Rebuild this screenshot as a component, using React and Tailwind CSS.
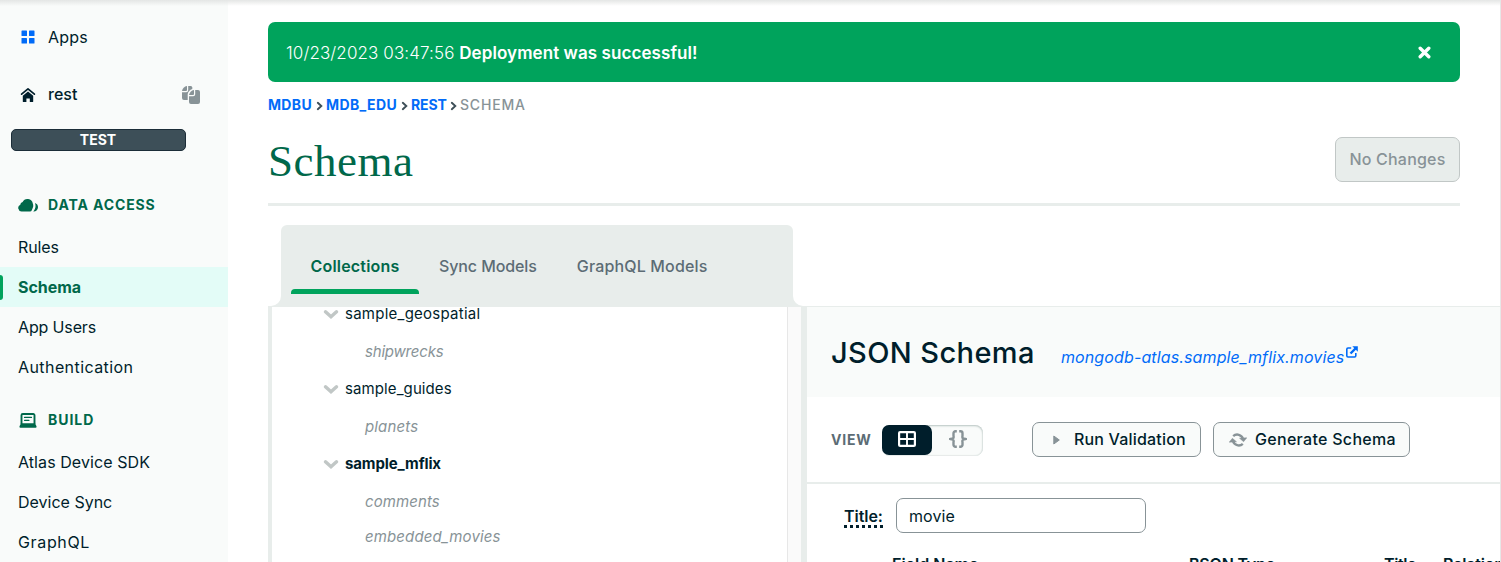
import React from "react";

const dataAccess = [
  { label: "Rules", cls: "tracking-[-0.1px]" },
  { label: "Schema", active: true, cls: "" },
  { label: "App Users", cls: "tracking-[-0.14px]" },
  { label: "Authentication", cls: "tracking-[0.42px]" },
];
const build = [
  { label: "Atlas Device SDK", cls: "tracking-[0.08px]" },
  { label: "Device Sync", cls: "" },
  { label: "GraphQL", cls: "tracking-[0.65px]" },
];
const tree = [
  { label: "sample_geospatial", cls: "tracking-[0.25px]", db: true },
  { label: "shipwrecks", cls: "tracking-[-0.2px]" },
  { label: "sample_guides", cls: "tracking-[0.1px]", db: true },
  { label: "planets", cls: "tracking-[0.15px]" },
  { label: "sample_mflix", cls: "font-bold tracking-[-0.12px] text-[#001e2b]", db: true },
  { label: "comments", cls: "tracking-[0.1px]" },
];

function AppsIcon() {
  return (
    <svg width="14" height="14" viewBox="0 0 14 14" fill="#016bf8">
      <rect x="0.5" y="0.5" width="5.5" height="5.5" rx="0.6" />
      <rect x="8" y="0.5" width="5.5" height="5.5" rx="0.6" />
      <rect x="0.5" y="8" width="5.5" height="5.5" rx="0.6" />
      <rect x="8" y="8" width="5.5" height="5.5" rx="0.6" />
    </svg>
  );
}

function HomeIcon() {
  return (
    <svg width="16" height="16" viewBox="0 0 16 16">
      <path d="M1.6 7.2 8 1.8l6.4 5.4" fill="none" stroke="#001e2b" strokeWidth="1.7" strokeLinecap="round" strokeLinejoin="round" />
      <path d="M8 4.400 13.200 8.800V14.400a.7.7 0 0 1-.7.7H9.800V11.500H6.400v3.600H3.500a.7.7 0 0 1-.7-.7V8.800z" fill="#001e2b" />
    </svg>
  );
}

function CopyIcon() {
  return (
    <svg width="18" height="18" viewBox="0 0 18 18" fill="#889397">
      <path d="M5 0v4a1 1 0 0 1-1 1H0C.3 2.400 2.400.3 5 0z" />
      <path d="M6.200 0H8.500a2 2 0 0 1 1.800 1.200V3C7.800 4 6.200 5.500 5.700 8v6H2a2 2 0 0 1-2-2V6.200h4.200a2 2 0 0 0 2-2z" />
      <path d="M12 4v4a1 1 0 0 1-1 1H7c.5-2.600 2.300-4.600 5-5z" />
      <path d="M13.200 4H16a2 2 0 0 1 2 2v10a2 2 0 0 1-2 2H9a2 2 0 0 1-2-2v-5.800h4.200a2 2 0 0 0 2-2z" />
    </svg>
  );
}

function CloudIcon() {
  return (
    <svg width="20" height="14" viewBox="0 0 20 14" fill="#00684a">
      <path d="M3.500 13.500A3.500 3.500 0 0 1 2.300 6.800 3 3 0 0 1 4.600 4 5.400 5.400 0 0 1 14.800 5.500c.5 1.200.6 2.400.2 3.800l-1.200 2.900a2 2 0 0 1-1.800 1.300z" />
      <path d="M17 4.900A4.600 4.600 0 0 1 20 9.300a4.200 4.200 0 0 1-4.700 4.100c1.400-1.500 2.100-3.100 2.200-4.900.1-1.300-.1-2.500-.5-3.600z" />
    </svg>
  );
}

function LaptopIcon() {
  return (
    <svg width="18" height="15" viewBox="0 0 18 15">
      <path d="M2.500 11V2.300A1.300 1.300 0 0 1 3.800 1h10.400a1.300 1.300 0 0 1 1.300 1.300V11" fill="none" stroke="#00684a" strokeWidth="1.900" />
      <path d="M5.500 4.400h7M5.500 7.300h4.500" stroke="#00684a" strokeWidth="1.200" strokeLinecap="round" />
      <path d="M2 10.300h14l1.500 3v.6a.8.8 0 0 1-.8.800H1.300a.8.8 0 0 1-.8-.8v-.6z" fill="#00684a" />
    </svg>
  );
}

function RefreshIcon() {
  return (
    <svg width="18" height="16" viewBox="0 0 18 16">
      <g fill="none" stroke="#889397" strokeWidth="2.400">
        <path d="M4.200 4.200A6 6 0 0 1 14 6.800" />
        <path d="M13.800 11.800A6 6 0 0 1 4 9.200" />
      </g>
      <path d="M10.500 6.200 17.800 5.800 14.600 9.700z M7.500 9.800.2 10.200 3.400 6.300z" fill="#889397" stroke="#889397" strokeWidth=".5" strokeLinejoin="round" />
    </svg>
  );
}

function ExternalIcon() {
  return (
    <svg width="12" height="12" viewBox="0 0 12 12" className="mt-[1px] ml-[2px]">
      <path d="M5.200 2H2a1.200 1.200 0 0 0-1.200 1.200V9.800A1.200 1.200 0 0 0 2 11h6.600a1.200 1.200 0 0 0 1.200-1.200V7" fill="none" stroke="#016bf8" strokeWidth="1.600" />
      <path d="M4.500 7.500 9.500 2.500" stroke="#016bf8" strokeWidth="2.400" />
      <path d="M6.300.2H11.800V5.700z" fill="#016bf8" />
    </svg>
  );
}

function Chevron() {
  return (
    <svg width="16" height="11" viewBox="0 0 16 11" className="mr-[6px]">
      <path d="M2.500 2.800 8 7.700l5.500-4.900" fill="none" stroke="#c1c7c6" strokeWidth="3.500" strokeLinecap="round" strokeLinejoin="miter" />
    </svg>
  );
}

function Crumb() {
  return (
    <svg width="10" height="10" viewBox="0 0 10 10" className="mt-px">
      <path d="M1.800 1.800 5.300 5 1.800 8.200" fill="none" stroke="#3d4f58" strokeWidth="1.900" strokeLinecap="round" />
    </svg>
  );
}

function NavItem({ item }) {
  return item.active ? (
    <a className="relative flex h-10 items-center bg-[#e3fcf7] pl-[18px] font-bold tracking-[-0.05px] text-[#00684a]">
      <span className="absolute top-2 left-0 h-[25px] w-[3px] rounded-r-[4px] bg-[#00a35c]" />
      <span className={item.cls}>{item.label}</span>
    </a>
  ) : (
    <a className="flex h-10 items-center pl-[18px]">
      <span className={item.cls}>{item.label}</span>
    </a>
  );
}

function Sidebar() {
  return (
    <nav className="flex h-full w-[228px] shrink-0 flex-col bg-[#f9fbfa] text-base">
      <div className="mt-[22px] flex h-[30px] items-center pl-[21px]">
        <AppsIcon />
        <span className="ml-[13px] tracking-[0.2px]">Apps</span>
      </div>
      <div className="mt-[27px] flex h-[32px] items-center pr-[28px] pl-[20px]">
        <HomeIcon />
        <span className="-mt-[2px] ml-[12px] flex-1 font-medium">rest</span>
        <CopyIcon />
      </div>
      <div className="mt-[18px] ml-[11px] flex h-[22px] w-[175px] items-center justify-center rounded-[5px] border border-[#1c2d38] bg-[#3d4f58] pr-px text-sm font-bold text-white">
        TEST
      </div>
      <div className="mt-[39px] flex h-[30px] items-center pl-[18px] text-sm font-bold text-[#00684a]">
        <CloudIcon />
        <span className="ml-[10px] tracking-[0.87px]">DATA ACCESS</span>
      </div>
      <div className="mt-[7px] flex flex-col">
        {dataAccess.map((i) => <NavItem key={i.label} item={i} />)}
      </div>
      <div className="mt-[18px] flex h-[30px] items-center pl-[19px] text-sm font-bold text-[#00684a]">
        <LaptopIcon />
        <span className="ml-[11px] tracking-[0.95px]">BUILD</span>
      </div>
      <div className="mt-[7px] flex flex-col">
        {build.map((i) => <NavItem key={i.label} item={i} />)}
      </div>
    </nav>
  );
}

function Tabs() {
  return (
    <div className="flex h-[82px] items-end">
      <svg width="13" height="82" viewBox="0 0 13 82">
        <path d="M3 81A10 10 0 0 0 13 71V82H0V81z" fill="#e8edeb" />
      </svg>
      <div className="flex h-full w-[512px] rounded-t-[6px] bg-[#e8edeb] pl-[10px] font-medium text-[#5c6c75]">
        <div className="flex h-[69px] w-[128px] flex-col items-center justify-end font-semibold text-[#00684a]">
          <span className="mb-[11px] tracking-[0.2px]">Collections</span>
          <span className="h-[5px] w-full rounded-t-[4px] bg-[#00a35c]" />
        </div>
        <div className="ml-[20px] h-[69px] pt-[29px] tracking-[-0.1px]">Sync Models</div>
        <div className="ml-[40px] h-[69px] pt-[29px] tracking-[0.16px]">GraphQL Models</div>
      </div>
      <svg width="10" height="82" viewBox="0 0 10 82">
        <path d="M10 81A10 10 0 0 1 0 71V82H10z" fill="#e8edeb" />
      </svg>
      <div className="h-px flex-1 bg-[#e8edeb]" />
    </div>
  );
}

function Tree() {
  return (
    <div className="flex h-full w-[539px] shrink-0 border-l-4 border-[#e8edeb]">
      <div className="h-full w-[515px] overflow-hidden text-[15px]">
        <div className="-mt-[11.5px] flex flex-col">
          {tree.map((n) =>
            n.db ? (
              <div key={n.label} className="flex h-[37.5px] items-center pl-[51px]">
                <Chevron />
                <span className={n.cls}>{n.label}</span>
              </div>
            ) : (
              <div key={n.label} className="flex h-[37.5px] items-center pl-[93px] text-[#889397] italic">
                <span className={n.cls}>{n.label}</span>
              </div>
            )
          )}
          <div className="flex h-[33px] items-center pl-[93px] tracking-[0.13px] text-[#889397] italic">embedded_movies</div>
        </div>
      </div>
      <div className="h-full w-[14px] border-l border-[#e7e7e7] bg-[#fafafa]" />
      <div className="h-full w-[6px] bg-[#e8edeb]" />
    </div>
  );
}

function SchemaPanel() {
  return (
    <div className="flex h-full min-w-0 flex-1 flex-col">
      <div className="flex h-[90px] shrink-0 items-center bg-[#f9fbfa] pl-[24px]">
        <h2 className="mt-[2px] text-[29px] font-medium tracking-[0.4px]">JSON Schema</h2>
        <a className="mt-[10px] ml-[26px] flex items-start text-[#016bf8] italic">
          <span className="tracking-[0.13px]">mongodb-atlas.sample_mflix.movies</span>
          <ExternalIcon />
        </a>
      </div>
      <div className="flex h-[87px] shrink-0 items-center border-b-2 border-[#e8edeb] pl-[24px]">
        <span className="w-[51px] text-sm font-bold tracking-[0.8px] text-[#5c6c75]">VIEW</span>
        <div className="mt-px flex h-[31px] w-[101px] rounded-[8px] bg-[#f9fbfa] shadow-[inset_0_1px_2px_#b8c4c2,inset_0_-1px_1px_#e8edeb,inset_-1px_0_1px_#e8edeb]">
          <div className="flex h-[30px] w-[50px] items-center justify-center rounded-[7px] bg-[#001e2b]">
            <svg width="18" height="16" viewBox="0 0 18 16" className="-mt-[2px]">
              <rect x="1.100" y="1.100" width="15.800" height="13.800" rx="1" fill="none" stroke="#fff" strokeWidth="2.200" />
              <path d="M9 1v14M1 8h16" stroke="#fff" strokeWidth="1.900" />
            </svg>
          </div>
          <div className="-mt-px flex h-[30px] flex-1 items-center justify-center">
            <svg width="18" height="18" viewBox="0 0 18 18" fill="none" stroke="#889397" strokeWidth="2.400">
              <path d="M7.800 1.300H6.500A2 2 0 0 0 4.500 3.300V6A2.500 2.500 0 0 1 1 9a2.500 2.500 0 0 1 3.500 3v2.700a2 2 0 0 0 2 2H7.800" />
              <path d="M10.200 1.300h1.300A2 2 0 0 1 13.500 3.300V6A2.500 2.500 0 0 0 17 9a2.500 2.500 0 0 0-3.500 3v2.700a2 2 0 0 1-2 2H10.200" />
            </svg>
          </div>
        </div>
        <button className="ml-[49px] flex h-[35px] w-[169px] items-center rounded-[7px] border border-[#889397] bg-[#f9fbfa] pl-[20px] font-medium">
          <svg width="7" height="10" viewBox="0 0 7 10">
            <path d="M.8 1v8L6.300 5z" fill="#889397" stroke="#889397" strokeLinejoin="round" />
          </svg>
          <span className="-mt-px ml-[14px] tracking-[0.18px]">Run Validation</span>
        </button>
        <button className="ml-[12px] flex h-[35px] w-[197px] items-center rounded-[7px] border border-[#889397] bg-[#f9fbfa] pl-[15px] font-medium">
          <RefreshIcon />
          <span className="-mt-px ml-[8px] tracking-[0.3px]">Generate Schema</span>
        </button>
      </div>
      <div className="flex shrink-0 items-center pt-[14px] pl-[37px]">
        <span className="h-[24px] w-[39px] border-b-[3px] border-dotted border-[#001e2b] leading-6 font-semibold tracking-[-0.05px]">Title:</span>
        <div className="ml-[13px] flex h-[35px] w-[250px] items-center rounded-[7px] border border-[#889397] bg-white pl-[12px] tracking-[0.1px]">movie</div>
      </div>
      <div className="mt-[19px] flex shrink-0 pl-[85px] leading-6 font-semibold whitespace-nowrap">
        <span className="w-[297px] shrink-0">Field Name</span>
        <span className="w-[195px] shrink-0 tracking-[-0.2px]">BSON Type</span>
        <span className="w-[59px] shrink-0 tracking-[-0.4px]">Title</span>
        <span className="shrink-0 tracking-[-0.2px]">Relationship</span>
      </div>
    </div>
  );
}

export default function App() {
  return (
    <div className="relative flex h-[562px] w-full overflow-hidden bg-white font-['Inter','Liberation_Sans',sans-serif] text-base text-[#001e2b]">
      <Sidebar />
      <main className="flex h-full min-w-0 flex-1 flex-col overflow-hidden border-r border-[#e7e7e7] pl-[40px]">
        <div className="mt-[22px] mr-[40px] flex h-[60px] shrink-0 items-center justify-between rounded-[7px] bg-[#00a35c] pr-[29px] pl-[18px] text-[17px] text-white">
          <p className="mt-[3px]">
            <span className="font-light tracking-[0.1px]">10/23/2023 03:47:56</span>{" "}
            <span className="font-semibold tracking-[0.08px]">Deployment was successful!</span>
          </p>
          <svg width="13" height="13" viewBox="0 0 13 13">
            <path d="M2.200 2.200l8.600 8.600M10.800 2.200l-8.600 8.600" stroke="#fff" strokeWidth="3.400" strokeLinecap="round" />
          </svg>
        </div>
        <div className="mt-[13px] flex h-5 shrink-0 items-center text-sm font-bold text-[#016bf8]">
          <span className="w-[48px] tracking-[0.33px]">MDBU</span>
          <Crumb />
          <span className="w-[75px] tracking-[0.37px]">MDB_EDU</span>
          <Crumb />
          <span className="w-[39px] tracking-[-0.1px]">REST</span>
          <Crumb />
          <span className="font-medium tracking-[0.8px] text-[#889397]">SCHEMA</span>
        </div>
        <div className="mt-[22px] mr-[40px] flex h-[69px] shrink-0 items-start justify-between border-b-[3px] border-[#e8edeb]">
          <h1 className="font-['Liberation_Serif',serif] text-[45px] leading-[48px] tracking-[0.5px] text-[#00684a]">Schema</h1>
          <button className="h-[45px] w-[125px] rounded-[7px] border border-[#c1c7c6] bg-[#e8edeb] pb-[2px] font-medium tracking-[0.2px] text-[#889397]">No Changes</button>
        </div>
        <div className="mt-[19px] shrink-0">
          <Tabs />
        </div>
        <div className="flex min-h-0 flex-1 overflow-hidden">
          <Tree />
          <SchemaPanel />
        </div>
      </main>
      <div className="absolute inset-x-0 top-0 h-[6px] bg-linear-to-b from-[#e4e6e5] to-transparent" />
    </div>
  );
}
